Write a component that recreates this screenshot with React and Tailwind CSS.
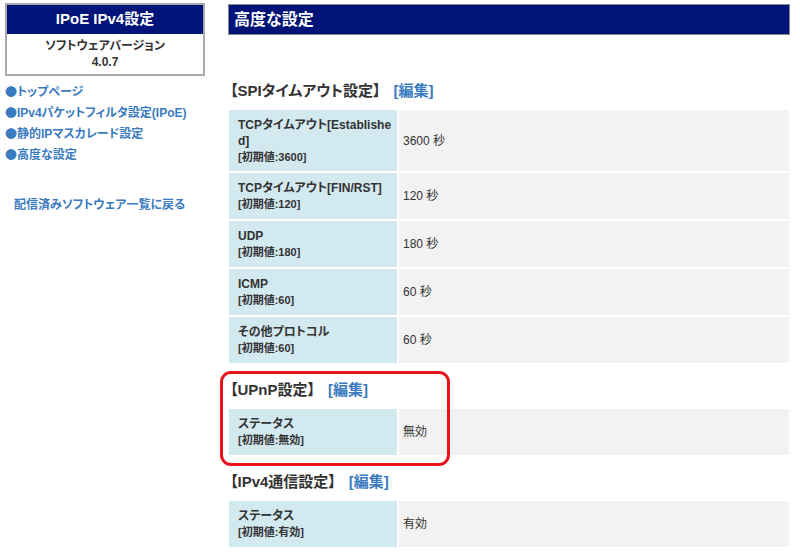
import React from "react";

const font = {
  fontFamily: '"Liberation Sans", "Noto Sans CJK JP", sans-serif',
};

const cjk = {
  fontFamily: '"Noto Sans CJK JP", sans-serif',
};

const sections = [
  {
    title: "【SPIタイムアウト設定】",
    rows: [
      { name: ["TCPタイムアウト[Establishe", "d]"], init: "[初期値:3600]", value: "3600 秒" },
      { name: ["TCPタイムアウト[FIN/RST]"], init: "[初期値:120]", value: "120 秒" },
      { name: ["UDP"], init: "[初期値:180]", value: "180 秒" },
      { name: ["ICMP"], init: "[初期値:60]", value: "60 秒" },
      { name: ["その他プロトコル"], init: "[初期値:60]", value: "60 秒" },
    ],
  },
  {
    title: "【UPnP設定】",
    highlight: true,
    rows: [{ name: ["ステータス"], init: "[初期値:無効]", value: "無効" }],
  },
  {
    title: "【IPv4通信設定】",
    rows: [{ name: ["ステータス"], init: "[初期値:有効]", value: "有効" }],
  },
];

const menu = [
  "トップページ",
  "IPv4パケットフィルタ設定(IPoE)",
  "静的IPマスカレード設定",
  "高度な設定",
];

const Row = ({ row }) => (
  <div className="flex gap-[2px] mb-[2px]">
    <div
      className={
        row.name.length > 1
          ? "w-[168px] shrink-0 bg-[#d2e9ef] px-[9px] pt-[7px] pb-[6px] flex flex-col justify-center"
          : "w-[168px] shrink-0 bg-[#d2e9ef] px-[9px] py-[7px] flex flex-col justify-center"
      }
    >
      {row.name.map((n) => (
        <div key={n} className="text-[12px] leading-[16px] font-bold text-[#333] whitespace-nowrap">
          {n}
        </div>
      ))}
      <div className="text-[11px] leading-[16px] font-bold text-[#333]">{row.init}</div>
    </div>
    <div className="flex-1 bg-[#f2f2f2] flex items-center px-[4px] text-[12px] text-[#333]">
      {row.value}
    </div>
  </div>
);

const Section = ({ section, first }) => {
  const body = (
    <>
      <div
        className={
          first
            ? "h-[46px] flex items-end pb-[9px] pl-[1px] text-[15px] leading-[20px] font-bold"
            : "h-[44px] flex items-end pb-[9px] pl-[1px] text-[15px] leading-[20px] font-bold"
        }
      >
        <span className="text-[#333]">{section.title}</span>
        <span className="ml-[13px] text-[#3a7bbf]">[編集]</span>
      </div>
      {section.rows.map((r) => (
        <Row key={r.name[0] + r.init} row={r} />
      ))}
    </>
  );
  if (!section.highlight) return <div>{body}</div>;
  return (
    <div className="relative">
      {body}
      <div className="absolute left-[-9px] top-[6px] w-[230px] h-[95px] border-[3px] border-[#e8141a] rounded-[11px] pointer-events-none" />
    </div>
  );
};

export default function App() {
  return (
    <div
      className="w-[800px] h-[560px] bg-white overflow-hidden flex [font-feature-settings:'palt']"
      style={font}
    >
      <aside className="w-[200px] ml-[5px] mt-[3px] shrink-0">
        <div className="border-2 border-[#aaaaaa]">
          <div className="h-[29px] bg-[#001479] text-white text-[15px] font-bold flex items-center justify-center">
            IPoE IPv4設定
          </div>
          <div className="h-[40px] flex flex-col items-center justify-center text-[12px] leading-[16px] font-bold text-[#333]">
            <span>ソフトウェアバージョン</span>
            <span>4.0.7</span>
          </div>
        </div>
        <ul className="mt-[5px] text-[12px] font-bold text-[#3a7bbf]">
          {menu.map((m) => (
            <li key={m} className="h-[21px] flex items-center">
              <span className="w-[12px] text-[12px] [font-feature-settings:normal]" style={cjk}>
                ●
              </span>
              {m}
            </li>
          ))}
        </ul>
        <div className="mt-[31px] pl-[9px] text-[12px] font-bold text-[#3a7bbf]">
          配信済みソフトウェア一覧に戻る
        </div>
      </aside>
      <main className="ml-[23px] w-[562px] mt-[4px]">
        <div className="h-[31px] bg-[#001478] border border-[#888] text-white text-[16px] font-bold flex items-center pl-[5px]">
          高度な設定
        </div>
        <div className="mt-[29px] pl-[1px] pr-[1px]">
          {sections.map((s, i) => (
            <Section key={s.title} section={s} first={i === 0} />
          ))}
        </div>
      </main>
    </div>
  );
}
